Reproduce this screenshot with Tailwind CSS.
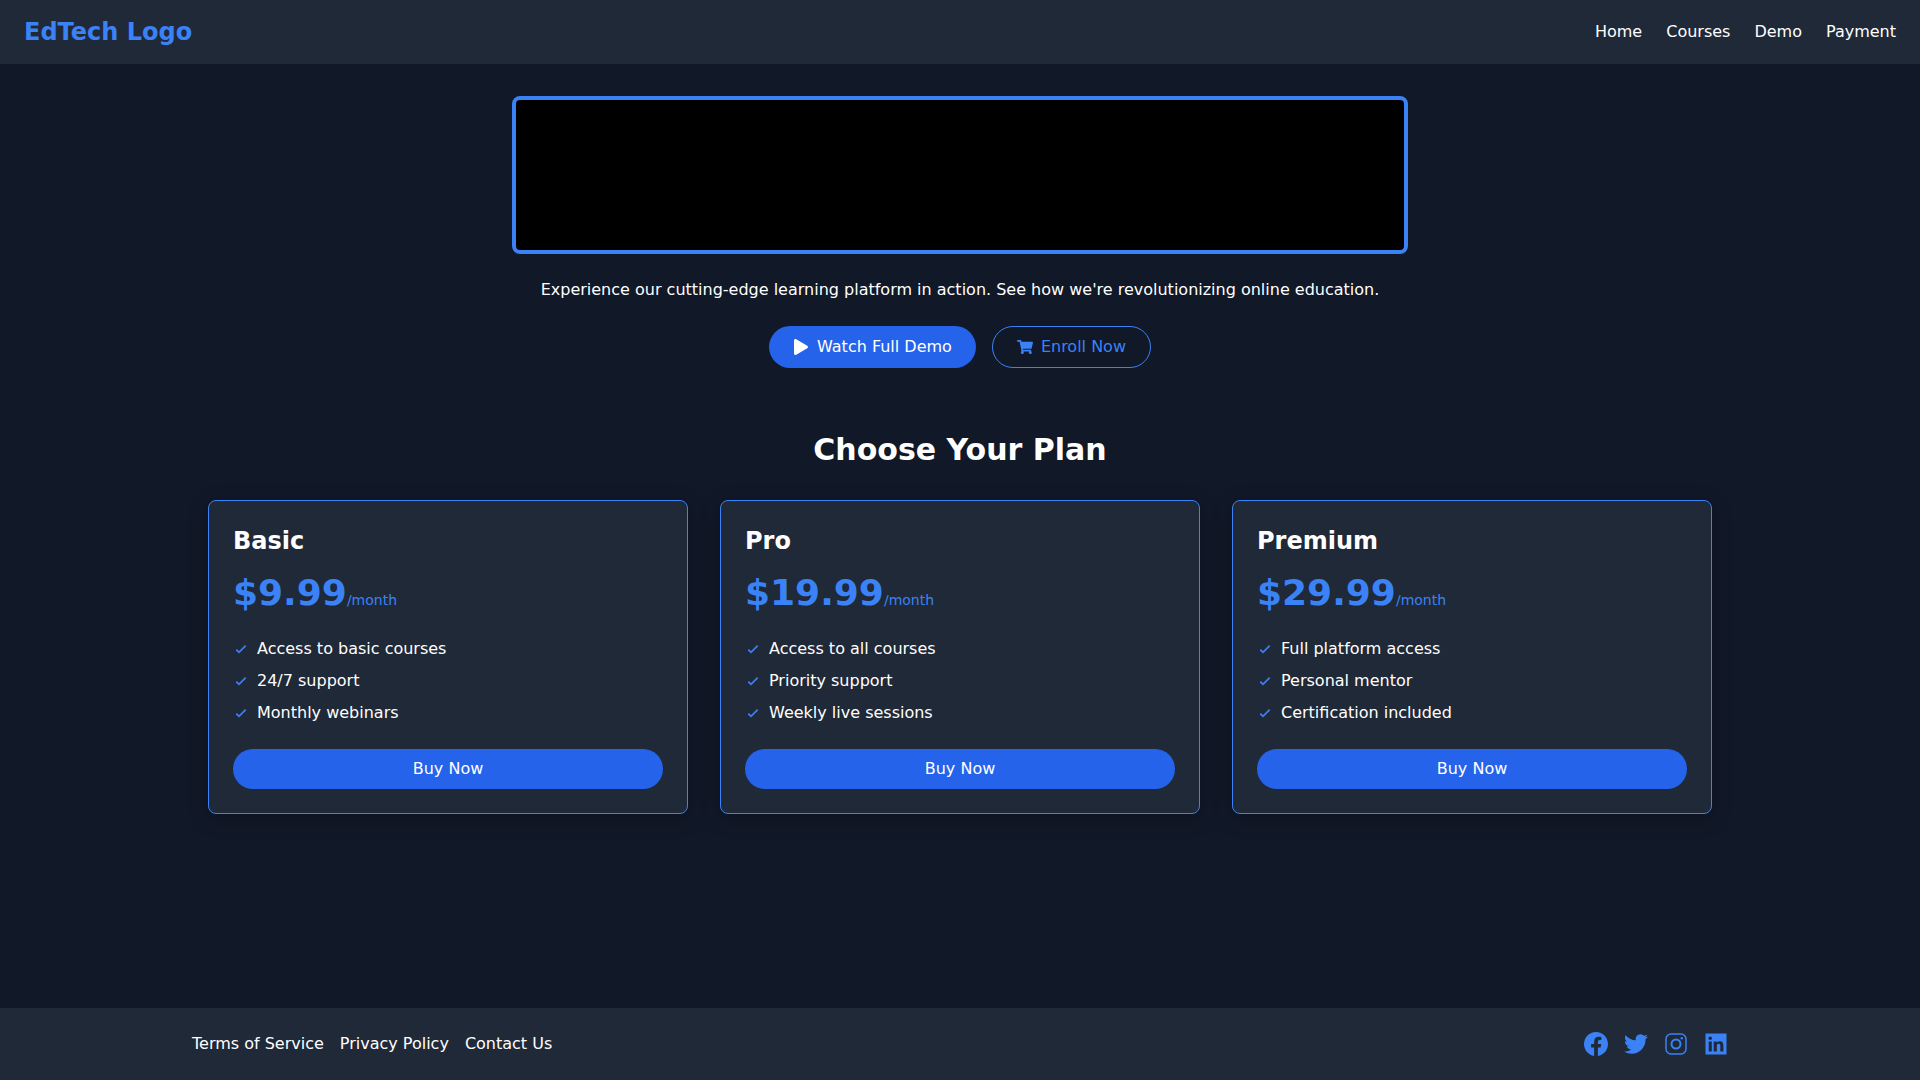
<!DOCTYPE html>
<html lang="en">
<head>
<meta charset="utf-8">
<title>EdTech</title>
<script src="https://cdn.jsdelivr.net/npm/@tailwindcss/browser@4"></script>
</head>
<body class="bg-[#111827] text-white font-['DejaVu_Sans',sans-serif]">
<div class="flex flex-col h-[1080px] overflow-hidden">
  <nav class="h-16 shrink-0 bg-[#1f2937] px-6 flex items-center justify-between">
    <a class="text-2xl font-bold text-[#3b82f6]">EdTech Logo</a>
    <div class="flex gap-6">
      <a>Home</a><a>Courses</a><a>Demo</a><a>Payment</a>
    </div>
  </nav>
  <main class="flex-1 pt-8 px-4 flex flex-col items-center">
    <div class="w-[896px] h-[158px] bg-black border-4 border-[#3b82f6] rounded-lg"></div>
    <p class="mt-6 text-base text-center">Experience our cutting-edge learning platform in action. See how we're revolutionizing online education.</p>
    <div class="mt-6 flex justify-center gap-4">
      <button class="h-[42px] px-6 rounded-full bg-[#2563eb] flex items-center gap-2">
        <svg class="w-4 h-4" viewBox="0 0 448 512" fill="#fff"><path d="M424 214 72 6C43-11 0 5 0 48v416c0 38 42 61 72 42l352-208c31-18 31-66 0-84z"/></svg>
        Watch Full Demo
      </button>
      <button class="h-[42px] px-6 rounded-full border border-[#3b82f6] text-[#3b82f6] flex items-center gap-2">
        <svg class="w-4 h-4" viewBox="0 0 576 512" fill="#3b82f6"><path d="M528 301l47-208c3-15-8-29-23-29H159l-9-47C148 7 138 0 127 0H24C11 0 0 11 0 24v16c0 13 11 24 24 24h70l70 343c-17 10-28 28-28 49 0 31 25 56 56 56s56-25 56-56c0-16-6-30-17-40h210c-11 10-17 24-17 40 0 31 25 56 56 56s56-25 56-56c0-22-13-41-32-50l6-25c3-15-8-29-23-29H218l-7-32h294c11 0 21-8 23-19z"/></svg>
        Enroll Now
      </button>
    </div>
    <h2 class="mt-16 text-3xl font-bold text-center leading-9">Choose Your Plan</h2>
    <div class="mt-8 w-full px-[192px] grid grid-cols-3 gap-8">
      <div class="h-[314px] rounded-lg border border-[#3b82f6] bg-[#1f2937] p-6 shadow-[0_4px_20px_rgba(0,0,0,0.25)] flex flex-col">
        <h3 class="text-2xl font-bold leading-8">Basic</h3>
        <div class="mt-4 flex items-baseline"><span class="text-4xl font-bold text-[#3b82f6] leading-10">$9.99</span><span class="text-sm text-[#3b82f6]">/month</span></div>
        <ul class="mt-6 flex flex-col gap-2">
          <li class="flex items-center gap-2"><svg class="w-4 h-4 shrink-0" viewBox="0 0 24 24" fill="none" stroke="#3b82f6" stroke-width="2.5"><path d="M5 13l4 4L19 7"/></svg>Access to basic courses</li>
          <li class="flex items-center gap-2"><svg class="w-4 h-4 shrink-0" viewBox="0 0 24 24" fill="none" stroke="#3b82f6" stroke-width="2.5"><path d="M5 13l4 4L19 7"/></svg>24/7 support</li>
          <li class="flex items-center gap-2"><svg class="w-4 h-4 shrink-0" viewBox="0 0 24 24" fill="none" stroke="#3b82f6" stroke-width="2.5"><path d="M5 13l4 4L19 7"/></svg>Monthly webinars</li>
        </ul>
        <button class="mt-6 h-10 rounded-full bg-[#2563eb]">Buy Now</button>
      </div>
      <div class="h-[314px] rounded-lg border border-[#3b82f6] bg-[#1f2937] p-6 shadow-[0_4px_20px_rgba(0,0,0,0.25)] flex flex-col">
        <h3 class="text-2xl font-bold leading-8">Pro</h3>
        <div class="mt-4 flex items-baseline"><span class="text-4xl font-bold text-[#3b82f6] leading-10">$19.99</span><span class="text-sm text-[#3b82f6]">/month</span></div>
        <ul class="mt-6 flex flex-col gap-2">
          <li class="flex items-center gap-2"><svg class="w-4 h-4 shrink-0" viewBox="0 0 24 24" fill="none" stroke="#3b82f6" stroke-width="2.5"><path d="M5 13l4 4L19 7"/></svg>Access to all courses</li>
          <li class="flex items-center gap-2"><svg class="w-4 h-4 shrink-0" viewBox="0 0 24 24" fill="none" stroke="#3b82f6" stroke-width="2.5"><path d="M5 13l4 4L19 7"/></svg>Priority support</li>
          <li class="flex items-center gap-2"><svg class="w-4 h-4 shrink-0" viewBox="0 0 24 24" fill="none" stroke="#3b82f6" stroke-width="2.5"><path d="M5 13l4 4L19 7"/></svg>Weekly live sessions</li>
        </ul>
        <button class="mt-6 h-10 rounded-full bg-[#2563eb]">Buy Now</button>
      </div>
      <div class="h-[314px] rounded-lg border border-[#3b82f6] bg-[#1f2937] p-6 shadow-[0_4px_20px_rgba(0,0,0,0.25)] flex flex-col">
        <h3 class="text-2xl font-bold leading-8">Premium</h3>
        <div class="mt-4 flex items-baseline"><span class="text-4xl font-bold text-[#3b82f6] leading-10">$29.99</span><span class="text-sm text-[#3b82f6]">/month</span></div>
        <ul class="mt-6 flex flex-col gap-2">
          <li class="flex items-center gap-2"><svg class="w-4 h-4 shrink-0" viewBox="0 0 24 24" fill="none" stroke="#3b82f6" stroke-width="2.5"><path d="M5 13l4 4L19 7"/></svg>Full platform access</li>
          <li class="flex items-center gap-2"><svg class="w-4 h-4 shrink-0" viewBox="0 0 24 24" fill="none" stroke="#3b82f6" stroke-width="2.5"><path d="M5 13l4 4L19 7"/></svg>Personal mentor</li>
          <li class="flex items-center gap-2"><svg class="w-4 h-4 shrink-0" viewBox="0 0 24 24" fill="none" stroke="#3b82f6" stroke-width="2.5"><path d="M5 13l4 4L19 7"/></svg>Certification included</li>
        </ul>
        <button class="mt-6 h-10 rounded-full bg-[#2563eb]">Buy Now</button>
      </div>
    </div>
  </main>
  <footer class="h-[72px] shrink-0 bg-[#1f2937] px-[192px] flex items-center justify-between">
    <div class="flex gap-4"><a>Terms of Service</a><a>Privacy Policy</a><a>Contact Us</a></div>
    <div class="flex gap-4 items-center">
      <svg class="w-6 h-6" viewBox="0 0 24 24" fill="#3b82f6"><path d="M24 12.07C24 5.4 18.63 0 12 0S0 5.4 0 12.07c0 6.03 4.39 11.02 10.13 11.93v-8.44H7.08v-3.49h3.05V9.41c0-3.02 1.79-4.69 4.53-4.69 1.31 0 2.69.24 2.69.24v2.97h-1.52c-1.49 0-1.95.93-1.95 1.89v2.25h3.33l-.53 3.49h-2.8V24C19.61 23.09 24 18.1 24 12.07z"/></svg>
      <svg class="w-6 h-6" viewBox="0 0 24 24" fill="#3b82f6"><path d="M23.95 4.57a10 10 0 0 1-2.82.77 4.96 4.96 0 0 0 2.16-2.72c-.95.55-2 .96-3.12 1.19a4.92 4.92 0 0 0-8.38 4.48C7.69 8.09 4.07 6.13 1.64 3.16a4.82 4.82 0 0 0-.67 2.48c0 1.71.87 3.21 2.19 4.1a4.9 4.9 0 0 1-2.23-.62v.06a4.92 4.92 0 0 0 3.95 4.83 5 5 0 0 1-2.21.08 4.94 4.94 0 0 0 4.6 3.42A9.87 9.87 0 0 1 0 19.54a14 14 0 0 0 7.56 2.21c9.05 0 14-7.5 14-13.98 0-.21 0-.42-.02-.63a9.94 9.94 0 0 0 2.46-2.55z"/></svg>
      <svg class="w-6 h-6" viewBox="0 0 24 24" fill="none" stroke="#3b82f6" stroke-width="1.5"><rect x="2" y="2" width="20" height="20" rx="5"/><circle cx="12" cy="12" r="4.5" stroke-width="2"/><circle cx="17.8" cy="6.2" r="1.2" fill="#3b82f6" stroke="none"/></svg>
      <svg class="w-6 h-6" viewBox="0 0 24 24" fill="#3b82f6"><path fill-rule="evenodd" d="M1.5 1.5h21v21h-21zM19.4 19.4h-3.1v-4.9c0-1.2 0-2.7-1.6-2.7s-1.9 1.3-1.9 2.6v5h-3.1V9.4h3v1.4h0c.4-.8 1.4-1.6 3-1.6 3.1 0 3.7 2.1 3.7 4.8zM6.2 8a1.8 1.8 0 1 1 0-3.6 1.8 1.8 0 0 1 0 3.6zM7.8 19.4H4.7V9.4h3.1z"/></svg>
    </div>
  </footer>
</div>
</body>
</html>
